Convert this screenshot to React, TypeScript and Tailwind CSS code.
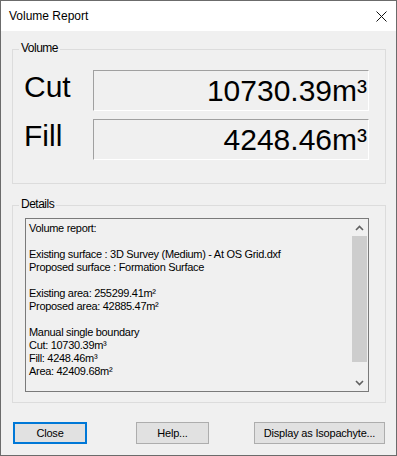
const UI = "'Liberation Sans', Arial, sans-serif";

const reportLines = [
  "Volume report:",
  "",
  "Existing surface : 3D Survey (Medium) - At OS Grid.dxf",
  "Proposed surface : Formation Surface",
  "",
  "Existing area: 255299.41m²",
  "Proposed area: 42885.47m²",
  "",
  "Manual single boundary",
  "Cut: 10730.39m³",
  "Fill: 4248.46m³",
  "Area: 42409.68m²",
];

function GroupBox({ label, className, children }: { label: string; className: string; children: React.ReactNode }) {
  return (
    <div className={`relative border border-[#dcdcdc] ${className}`}>
      <span className="absolute left-[6px] top-[-9px] bg-[#f0f0f0] px-[2px] text-[12px] leading-[15px] tracking-[-0.5px] text-black">
        {label}
      </span>
      {children}
    </div>
  );
}

function VolumeRow({ label, value }: { label: string; value: string }) {
  return (
    <div className="flex items-start">
      <div className="mt-[2px] w-[80px] pl-[11px] text-[30px] leading-[30px] text-black">{label}</div>
      <div className="flex h-[41px] w-[276px] items-center justify-end border border-b-white border-l-[#a0a0a0] border-r-white border-t-[#a0a0a0] pr-[1px] text-[30px] leading-[30px] text-black">
        {value}
      </div>
    </div>
  );
}

function Chevron({ up }: { up?: boolean }) {
  return (
    <svg width="9" height="6" viewBox="0 0 9 6">
      <path d={up ? "M1 5 L4.5 1.5 L8 5" : "M1 1 L4.5 4.5 L8 1"} fill="none" stroke="#606060" strokeWidth="1.6" />
    </svg>
  );
}

function Button({ label, focused, className }: { label: string; focused?: boolean; className: string }) {
  return (
    <div
      className={`flex h-[22px] items-center justify-center bg-[#e1e1e1] text-[11px] tracking-[-0.2px] text-black ${
        focused ? "border-2 border-[#0078d7]" : "border border-[#adadad]"
      } ${className}`}
    >
      {label}
    </div>
  );
}

export default function App() {
  return (
    <div className="flex h-[456px] w-[397px] flex-col border border-[#6b6b6b] bg-[#f0f0f0]" style={{ fontFamily: UI }}>
      {/* title bar */}
      <div className="flex h-[30px] shrink-0 items-center justify-between bg-white pl-[8px] pr-[9px]">
        <span className="text-[12px] text-black">Volume Report</span>
        <svg width="11" height="11" viewBox="0 0 11 11">
          <path d="M0.5 0.5 L10.5 10.5 M10.5 0.5 L0.5 10.5" stroke="#111" strokeWidth="1" />
        </svg>
      </div>

      <div className="flex flex-1 flex-col pl-[11px] pr-[10px]">
        <GroupBox label="Volume" className="mt-[18px] h-[135px]">
          <div className="flex flex-col gap-[8px] pt-[20px]">
            <VolumeRow label="Cut" value="10730.39m³" />
            <VolumeRow label="Fill" value="4248.46m³" />
          </div>
        </GroupBox>

        <GroupBox label="Details" className="mt-[21px] h-[198px]">
          <div className="ml-[12px] mt-[12px] flex h-[174px] w-[344px] border border-[#7a7a7a]">
            <div className="flex-1 pl-[3px] pt-[3px] text-[11px] leading-[13px] tracking-[-0.3px] text-black">
              {reportLines.map((l, i) => (
                <div key={i} className="h-[13px] whitespace-pre">
                  {l}
                </div>
              ))}
            </div>
            <div className="flex w-[17px] flex-col bg-[#f0f0f0]">
              <div className="flex h-[17px] items-center justify-center">
                <Chevron up />
              </div>
              <div className="mx-[1px] h-[126px] bg-[#cdcdcd]" />
              <div className="flex-1" />
              <div className="flex h-[17px] items-center justify-center">
                <Chevron />
              </div>
            </div>
          </div>
        </GroupBox>

        <div className="mt-[19px] flex">
          <Button label="Close" focused className="ml-[1px] w-[74px]" />
          <Button label="Help..." className="ml-[49px] w-[73px]" />
          <Button label="Display as Isopachyte..." className="ml-[45px] w-[131px]" />
        </div>
      </div>
    </div>
  );
}
